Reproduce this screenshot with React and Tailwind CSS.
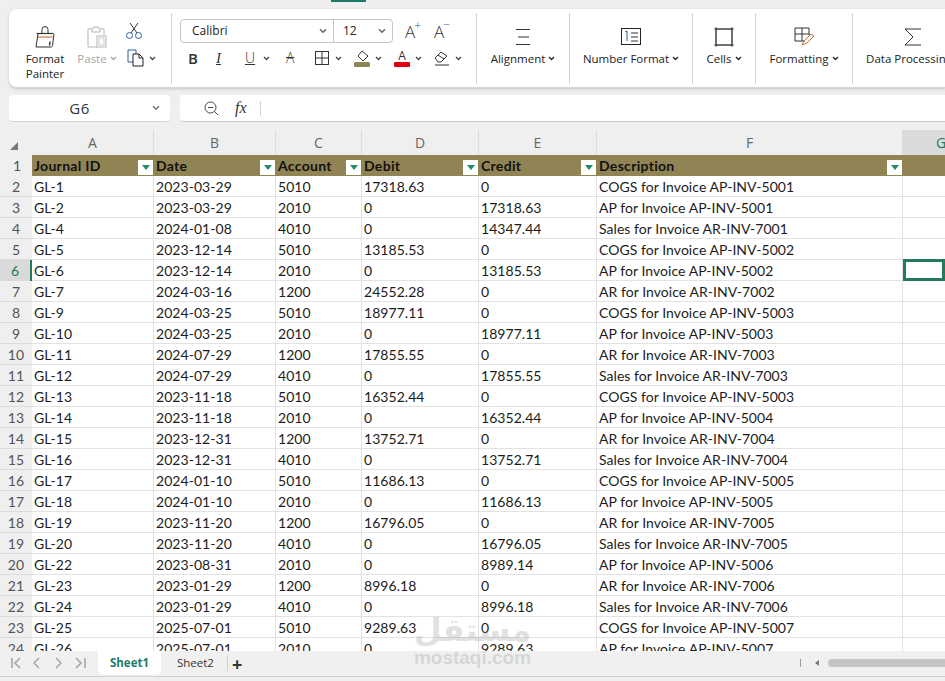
import React from "react";

const rows = [
  ["GL-1", "2023-03-29", "5010", "17318.63", "0", "COGS for Invoice AP-INV-5001"],
  ["GL-2", "2023-03-29", "2010", "0", "17318.63", "AP for Invoice AP-INV-5001"],
  ["GL-4", "2024-01-08", "4010", "0", "14347.44", "Sales for Invoice AR-INV-7001"],
  ["GL-5", "2023-12-14", "5010", "13185.53", "0", "COGS for Invoice AP-INV-5002"],
  ["GL-6", "2023-12-14", "2010", "0", "13185.53", "AP for Invoice AP-INV-5002"],
  ["GL-7", "2024-03-16", "1200", "24552.28", "0", "AR for Invoice AR-INV-7002"],
  ["GL-9", "2024-03-25", "5010", "18977.11", "0", "COGS for Invoice AP-INV-5003"],
  ["GL-10", "2024-03-25", "2010", "0", "18977.11", "AP for Invoice AP-INV-5003"],
  ["GL-11", "2024-07-29", "1200", "17855.55", "0", "AR for Invoice AR-INV-7003"],
  ["GL-12", "2024-07-29", "4010", "0", "17855.55", "Sales for Invoice AR-INV-7003"],
  ["GL-13", "2023-11-18", "5010", "16352.44", "0", "COGS for Invoice AP-INV-5003"],
  ["GL-14", "2023-11-18", "2010", "0", "16352.44", "AP for Invoice AP-INV-5004"],
  ["GL-15", "2023-12-31", "1200", "13752.71", "0", "AR for Invoice AR-INV-7004"],
  ["GL-16", "2023-12-31", "4010", "0", "13752.71", "Sales for Invoice AR-INV-7004"],
  ["GL-17", "2024-01-10", "5010", "11686.13", "0", "COGS for Invoice AP-INV-5005"],
  ["GL-18", "2024-01-10", "2010", "0", "11686.13", "AP for Invoice AP-INV-5005"],
  ["GL-19", "2023-11-20", "1200", "16796.05", "0", "AR for Invoice AR-INV-7005"],
  ["GL-20", "2023-11-20", "4010", "0", "16796.05", "Sales for Invoice AR-INV-7005"],
  ["GL-22", "2023-08-31", "2010", "0", "8989.14", "AP for Invoice AP-INV-5006"],
  ["GL-23", "2023-01-29", "1200", "8996.18", "0", "AR for Invoice AR-INV-7006"],
  ["GL-24", "2023-01-29", "4010", "0", "8996.18", "Sales for Invoice AR-INV-7006"],
  ["GL-25", "2025-07-01", "5010", "9289.63", "0", "COGS for Invoice AP-INV-5007"],
  ["GL-26", "2025-07-01", "2010", "0", "9289.63", "AP for Invoice AP-INV-5007"],
];

const headers = ["Journal ID", "Date", "Account", "Debit", "Credit", "Description"];
const gridCols = "grid grid-cols-[32px_122px_122px_86px_117px_118px_306px_1fr]";

const Chevron = ({ className = "" }) => (
  <svg width="7" height="5" viewBox="0 0 7 5" className={className} fill="none" stroke="currentColor" strokeWidth="1.3">
    <path d="M1 1l2.5 2.5L6 1" />
  </svg>
);

const Caret = () => <Chevron className="text-[#444] shrink-0" />;

const Icon = ({ w = 20, h = 20, children, className = "" }) => (
  <svg width={w} height={h} viewBox={`0 0 ${w} ${h}`} fill="none" stroke="#333" strokeWidth="1" className={className}>
    {children}
  </svg>
);

function FilterButton() {
  return (
    <span className="ml-auto mr-px mt-[5px] flex h-[15px] w-[15px] shrink-0 items-center justify-center bg-white">
      <span className="h-0 w-0 border-x-[4px] border-t-[5px] border-x-transparent border-t-[#1f8a6d]" />
    </span>
  );
}

function ClipboardGroup() {
  return (
    <div className="flex h-[71px] w-[163px] shrink-0 border-r border-[#d4d4d4] pl-[16px]">
      <div className="flex w-[40px] flex-col items-center pt-[13px]">
        <Icon w={22} h={22}>
          <path d="M8 7V3.5a3 3 0 0 1 6 0V7" />
          <path d="M2.5 7.5h17" strokeWidth="1.2" />
          <path d="M3.5 11h15" stroke="#c55a2b" />
          <path d="M4 8l-2 13h15c1 0 1.5-1 1.6-2L20 8" />
          <path d="M15.5 19.5l.6-4" strokeWidth="1.4" />
        </Icon>
        <div className="mt-[3px] text-center text-[11.5px] leading-[15px] text-[#222]">Format<br />Painter</div>
      </div>
      <div className="ml-[13px] flex w-[38px] flex-col items-center pt-[13px]">
        <Icon w={22} h={22}>
          <path d="M6 3H2v18h9" stroke="#b5b5b5" />
          <path d="M14 3h4v6" stroke="#b5b5b5" />
          <path d="M6 6V2h2.5V0.8h3V2H14v4z" stroke="#b5b5b5" />
          <rect x="11" y="10" width="9" height="11" stroke="#b5b5b5" />
          <rect x="13" y="12" width="5" height="7" stroke="#c9c9c9" />
        </Icon>
        <div className="mt-[3px] flex items-center gap-[3px] text-[11.5px] leading-[15px] text-[#a6a6a6]">Paste <Chevron /></div>
      </div>
      <div className="ml-[8px] flex flex-col pt-[9px]">
        <Icon w={18} h={18} className="ml-[1px]">
          <path d="M5 1l7 10M13 1L6 11" stroke="#333" />
          <circle cx="4.5" cy="13.5" r="3" stroke="#2b5f9e" />
          <circle cx="13.5" cy="13.5" r="3" stroke="#2b5f9e" />
        </Icon>
        <div className="ml-[3px] mt-[9px] flex items-center gap-[4px]">
          <Icon w={18} h={18}>
            <path d="M6 13H1V1h8v4" stroke="#2b5f9e" />
            <path d="M6 5h6l4 4v8H6z" stroke="#222" />
            <path d="M12 5v4h4" stroke="#222" />
          </Icon>
          <Caret />
        </div>
      </div>
    </div>
  );
}

function FontGroup() {
  return (
    <div className="h-[71px] w-[305px] shrink-0 border-r border-[#d4d4d4] pl-[8px] pt-[6px]">
      <div className="flex items-center">
        <div className="flex h-[24px] w-[213px] items-center rounded-[4px] border border-[#c4c4c4] text-[12px] text-[#222]">
          <div className="flex h-full w-[153px] items-center border-r border-[#c4c4c4] pl-[11px] pr-[4px]">
            Calibri
            <Chevron className="ml-auto mr-[1px] h-[6px] w-[10px] text-[#666]" />
          </div>
          <div className="flex flex-1 items-center pl-[9px] pr-[5px]">
            12
            <Chevron className="ml-auto h-[6px] w-[10px] text-[#666]" />
          </div>
        </div>
        <div className="ml-[12px] flex items-start text-[17px] font-light leading-none text-[#333]">
          A<span className="-ml-[1px] -mt-[3px] text-[12px] text-[#2b5f9e]">+</span>
        </div>
        <div className="ml-[13px] flex items-start text-[17px] font-light leading-none text-[#333]">
          A<span className="-ml-[1px] -mt-[4px] text-[12px] text-[#2b5f9e]">−</span>
        </div>
      </div>
      <div className="mt-[6px] flex items-center pl-[8px] text-[#333]">
        <span className="w-[28px] text-[15px] font-semibold leading-[18px]">B</span>
        <span className="w-[29px] font-['Liberation_Serif',serif] text-[15px] italic leading-[18px] underline">I</span>
        <div className="flex w-[41px] items-center gap-[8px]">
          <span className="text-[14px] font-light leading-[18px] underline">U</span>
          <Caret />
        </div>
        <span className="w-[29px] text-[14px] font-light leading-[18px] line-through">A</span>
        <div className="flex w-[39px] items-center gap-[6px]">
          <Icon w={14} h={14}>
            <rect x="0.5" y="0.5" width="13" height="13" />
            <path d="M7 0v14M0 7h14" />
          </Icon>
          <Caret />
        </div>
        <div className="flex w-[40px] items-center gap-[5px]">
          <Icon w={16} h={17}>
            <path d="M8 1l6 5-5 5-5-5z" />
            <rect x="0" y="12" width="16" height="5" rx="1.5" fill="#8f8454" stroke="none" />
          </Icon>
          <Caret />
        </div>
        <div className="flex w-[40px] items-center gap-[5px]">
          <div className="flex flex-col items-center">
            <span className="text-[12px] leading-[12px]">A</span>
            <span className="h-[5px] w-[16px] rounded-[1px] bg-[#e0000f]" />
          </div>
          <Caret />
        </div>
        <div className="flex items-center gap-[5px]">
          <Icon w={16} h={16}>
            <path d="M1 8l6-6 6 4-6 6H4z" />
            <path d="M4 5l6 4" />
            <path d="M1 15h14" />
          </Icon>
          <Caret />
        </div>
      </div>
    </div>
  );
}

function BigButton({ width, icon, label, border = true }) {
  return (
    <div className={`flex h-[71px] shrink-0 flex-col items-center pt-[14px] ${width} ${border ? "border-r border-[#d4d4d4]" : ""}`}>
      <div className="flex h-[20px] items-center">{icon}</div>
      <div className="mt-[4px] flex items-center gap-[3px] whitespace-nowrap text-[11.5px] leading-[15px] text-[#222]">
        {label}
      </div>
    </div>
  );
}

function Ribbon() {
  return (
    <div className="ml-[9px] mt-[7px] flex h-[79px] items-start rounded-l-[8px] border-b border-[#d8d8d8] bg-white pt-[4px] shadow-[0_1px_3px_rgba(0,0,0,0.18)]">
      <ClipboardGroup />
      <FontGroup />
      <BigButton
        width="w-[93px]"
        label={<>Alignment <Chevron /></>}
        icon={
          <Icon w={15} h={16}>
            <path d="M0 .5h14M2 8h11M0 15.5h14" />
          </Icon>
        }
      />
      <BigButton
        width="w-[123px]"
        label={<>Number Format <Chevron /></>}
        icon={
          <Icon w={20} h={18}>
            <rect x="0.5" y="0.5" width="19" height="16" stroke="#222" />
            <path d="M4 4l2-1v10" stroke="#2b5f9e" />
            <path d="M10 5h7M10 9h7M10 13h7" />
          </Icon>
        }
      />
      <BigButton
        width="w-[63px]"
        label={<>Cells <Chevron /></>}
        icon={
          <Icon w={20} h={20}>
            <rect x="2" y="2" width="16" height="16" />
            <path d="M0 2h20M0 18h20M2 0v20M18 0v20" strokeWidth="0.8" />
          </Icon>
        }
      />
      <BigButton
        width="w-[97px]"
        label={<>Formatting <Chevron /></>}
        icon={
          <Icon w={21} h={20}>
            <path d="M11 14H1V1h14v7M8 1v13M1 7h14" />
            <path d="M8 18l2-4 7-7 3 2-7 7z" stroke="#c8703d" />
          </Icon>
        }
      />
      <BigButton
        width="w-[112px]"
        border={false}
        label={<>Data Processing</>}
        icon={
          <Icon w={18} h={18} className="ml-[7px]">
            <path d="M17 1H1l8 8-8 8h16" />
          </Icon>
        }
      />
    </div>
  );
}

function FormulaBar() {
  return (
    <div className="mt-[7px] flex h-[27px] shrink-0 pl-[9px]">
      <div className="relative flex w-[161px] items-center justify-center rounded-[4px] border-b border-[#d0d0d0] bg-white pr-[20px] text-[15px] tracking-[0.5px] text-[#333]">
        G6
        <Chevron className="absolute right-[9px] h-[6px] w-[10px] text-[#777]" />
      </div>
      <div className="ml-[10px] flex flex-1 items-center rounded-l-[4px] border-b border-[#c8c8c8] bg-white">
        <svg width="15" height="15" viewBox="0 0 15 15" fill="none" stroke="#444" className="ml-[24px]">
          <circle cx="6.5" cy="6.5" r="5.5" />
          <path d="M10.5 10.5L14 14M4 6.5h5" />
        </svg>
        <span className="ml-[16px] font-['Liberation_Serif',serif] text-[16px] italic text-[#333]">fx</span>
        <span className="ml-[13px] h-[15px] w-px bg-[#d4d4d4]" />
      </div>
    </div>
  );
}

function ColumnHeaders() {
  return (
    <div className={`${gridCols} h-[25px] shrink-0 text-center text-[14px] leading-[25px] text-[#666]`}>
      <div className="flex items-end justify-end pb-[7px] pr-[14px]">
        <span className="h-0 w-0 border-b-[8px] border-l-[8px] border-b-[#777] border-l-transparent" />
      </div>
      {["A", "B", "C", "D", "E", "F"].map(letter => (
        <div key={letter} className="border-r border-[#dcdcdc]">{letter}</div>
      ))}
      <div className="border-b-2 border-[#217a5b] bg-[#dadada] pl-[33px] text-left text-[#217a5b]">G</div>
    </div>
  );
}

function Sheet() {
  return (
    <div className="flex-1 overflow-hidden font-['Lato',sans-serif] text-[14px] tracking-[0.05px] text-[#1c1c1c]">
      <div className={`${gridCols} auto-rows-[21px] leading-[22px]`}>
        <div className="bg-[#efefef] pl-[13px] text-[#555]">1</div>
        {headers.map(h => (
          <div key={h} className="flex bg-[#918454] pl-[2px] font-bold tracking-[0.3px] text-[#111]">
            {h}
            <FilterButton />
          </div>
        ))}
        <div className="bg-[#918454]" />

        {rows.map((row, i) => {
          const active = i === 4;
          return (
            <React.Fragment key={row[0]}>
              <div className={`text-center ${active ? "border-r-2 border-[#217a5b] bg-[#dadada] text-[#217a5b]" : "border-b border-[#dcdcdc] bg-[#efefef] text-[#555]"}`}>
                {i + 2}
              </div>
              {row.map((cell, j) => (
                <div key={j} className="truncate border-b border-r border-[#e2e2e2] bg-white pl-[2px]">{cell}</div>
              ))}
              <div className="relative border-b border-[#e2e2e2] bg-white">
                {active && <span className="absolute -inset-y-px inset-x-0 border-[3px] border-[#217a5b]" />}
              </div>
            </React.Fragment>
          );
        })}
      </div>
    </div>
  );
}

function TabBar() {
  return (
    <div className="flex h-[26px] shrink-0 items-start border-b border-[#d0d0d0] bg-[#f0f0f0] text-[11.5px]">
      <div className="flex h-[24px] w-[98px] items-center pl-[10px] text-[#a8a8a8]">
        <svg width="78" height="12" viewBox="0 0 78 12" fill="none" stroke="currentColor" strokeWidth="1.6">
          <path d="M2 1v10M10 1L5 6l5 5M29 1l-5 5 5 5M46 1l5 5-5 5M66 1l5 5-5 5M75 1v10" />
        </svg>
      </div>
      <div className="flex h-[24px] w-[63px] items-center justify-center rounded-b-[5px] bg-white font-bold text-[#1d7a66]">Sheet1</div>
      <div className="ml-[16px] flex h-[24px] items-center text-[#333]">Sheet2</div>
      <span className="ml-[13px] mt-[4px] h-[16px] w-px bg-[#cfcfcf]" />
      <span className="ml-[4px] mt-[1px] text-[18px] font-bold leading-[24px] text-[#333]">+</span>
      <div className="ml-auto flex h-[24px] items-center">
        <span className="h-[8px] w-px bg-[#999]" />
        <span className="ml-[14px] h-0 w-0 border-y-[3px] border-r-[4px] border-y-transparent border-r-[#777]" />
        <span className="ml-[9px] h-[8px] w-[117px] rounded-l-full bg-[#c4c4c4]" />
      </div>
    </div>
  );
}

export default function App() {
  return (
    <div className="relative flex h-[681px] w-[945px] flex-col overflow-hidden bg-[#efefef] font-['Open_Sans',sans-serif]">
      <div className="ml-[331px] h-[2px] w-[35px] shrink-0 bg-[#1d7a66]" />
      <Ribbon />
      <FormulaBar />
      <div className="h-[8px] shrink-0" />
      <ColumnHeaders />
      <Sheet />
      <TabBar />
      <div className="h-[4px] shrink-0" />
      {/* site watermark */}
      <div className="pointer-events-none absolute left-[416px] top-[610px] flex w-[113px] flex-col items-center text-[#8a8a8a] opacity-25">
        <span className="font-['DejaVu_Sans',sans-serif] text-[32px] font-bold leading-[40px]" dir="rtl">مستقل</span>
        <span className="font-['Liberation_Sans',sans-serif] text-[19px] font-bold leading-[16px]">mostaqi.com</span>
      </div>
    </div>
  );
}
